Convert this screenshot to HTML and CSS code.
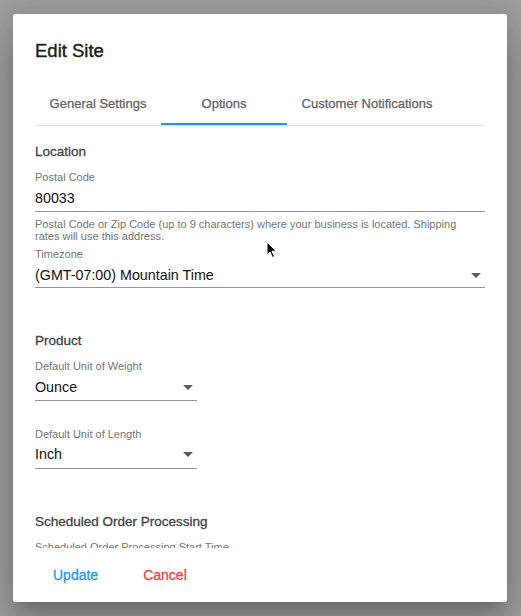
FILE: index.html
```html
<!DOCTYPE html>
<html>
<head>
<meta charset="utf-8">
<link rel="stylesheet" href="styles.css">
</head>
<body>
<div class="dialog">
  <h1 class="title">Edit Site</h1>
  <div class="tabs">
    <div class="tab">General Settings</div>
    <div class="tab active">Options</div>
    <div class="tab">Customer Notifications</div>
  </div>
  <div class="content">
    <h2 class="section first">Location</h2>
    <div class="field">
      <div class="label">Postal Code</div>
      <div class="input">80033</div>
    </div>
    <p class="helper">Postal Code or Zip Code (up to 9 characters) where your business is located. Shipping rates will use this address.</p>
    <div class="field tz">
      <div class="label">Timezone</div>
      <div class="input select">(GMT-07:00) Mountain Time<svg class="arrow" viewBox="7 10 10 5" width="10" height="5"><path d="M7 10l5 5 5-5z"/></svg></div>
    </div>

    <h2 class="section">Product</h2>
    <div class="field short">
      <div class="label">Default Unit of Weight</div>
      <div class="input select">Ounce<svg class="arrow" viewBox="7 10 10 5" width="10" height="5"><path d="M7 10l5 5 5-5z"/></svg></div>
    </div>
    <div class="field short second">
      <div class="label">Default Unit of Length</div>
      <div class="input select">Inch<svg class="arrow" viewBox="7 10 10 5" width="10" height="5"><path d="M7 10l5 5 5-5z"/></svg></div>
    </div>

    <h2 class="section last">Scheduled Order Processing</h2>
    <div class="field">
      <div class="label">Scheduled Order Processing Start Time</div>
    </div>
  </div>
  <div class="actions">
    <button class="btn update">Update</button>
    <button class="btn cancel">Cancel</button>
  </div>
</div>
<svg class="cursor" width="12" height="18" viewBox="0 0 12 18"><path d="M1 1 L1 14 L4 11 L6.5 16.5 L8.5 15.6 L6 10.2 L10.2 10.2 Z" fill="#000" stroke="#fff" stroke-width="1"/></svg>
</body>
</html>
```
FILE: styles.css
```css
html, body {
  margin: 0;
  height: 100%;
}
body {
  background: #9f9f9f;
  padding: 14px 14px 14px 13px;
  box-sizing: border-box;
  font-family: "Liberation Sans", Arial, sans-serif;
  overflow: hidden;
}
.dialog {
  width: 494px;
  height: 588px;
  background: #fff;
  border-radius: 2px;
  box-shadow: 0 11px 15px -7px rgba(0,0,0,.2), 0 24px 38px 3px rgba(0,0,0,.14), 0 9px 46px 8px rgba(0,0,0,.12);
  display: flex;
  flex-direction: column;
  padding: 0 22px;
  box-sizing: border-box;
}
.title {
  margin: 0;
  padding-top: 26px;
  font-size: 18.5px;
  line-height: 22px;
  font-weight: normal;
  -webkit-text-stroke: 0.4px currentColor;
  color: #1d1d1d;
  height: 37px;
}
.tabs {
  display: flex;
  height: 48px;
  border-bottom: 1px solid #e0e0e0;
  box-sizing: content-box;
}
.tab {
  width: 126px;
  box-sizing: border-box;
  display: flex;
  align-items: center;
  justify-content: center;
  font-size: 13px;
  -webkit-text-stroke: 0.25px currentColor;
  color: #5f5f5f;
  white-space: nowrap;
  border-bottom: 2px solid transparent;
  padding-top: 6px;
}
.tab.active {
  border-bottom-color: #2196f3;
}
.tab:last-child {
  width: 160px;
}
.content {
  flex: 1;
  overflow: hidden;
  padding-top: 16px;
}
.section {
  margin: 43px 0 0;
  font-size: 13.5px;
  line-height: 20px;
  font-weight: normal;
  -webkit-text-stroke: 0.3px currentColor;
  color: #424242;
}
.section.first {
  margin-top: 0;
}
.section.last {
  margin-top: 43px;
}
.field {
  margin-top: 8px;
}
.field.short {
  width: 162px;
}
.field.second {
  margin-top: 26px;
}
.label {
  font-size: 11px;
  line-height: 14px;
  color: #757575;
  margin-bottom: 4px;
  white-space: nowrap;
}
.field.second .label {
  margin-bottom: 3px;
}
.input {
  font-size: 14.3px;
  line-height: 20px;
  color: #111;
  padding-bottom: 3px;
  border-bottom: 1px solid #949494;
  display: flex;
  align-items: center;
  justify-content: space-between;
}
.field.tz .input {
  padding-bottom: 2px;
}
.field.second .input {
  padding-bottom: 4px;
}
.arrow {
  fill: #5a5a5a;
  margin-right: 4px;
}
.helper {
  margin: 6px 24px 0 0;
  font-size: 11px;
  line-height: 12px;
  color: #757575;
}
.field.tz {
  margin-top: 5px;
}
.actions {
  height: 54px;
  flex: none;
  display: flex;
  align-items: center;
  gap: 13px;
  padding-left: 2px;
  box-sizing: border-box;
}
.btn {
  background: none;
  border: none;
  font-family: inherit;
  font-size: 14px;
  -webkit-text-stroke: 0.3px currentColor;
  padding: 6px 16px;
  cursor: pointer;
}
.update { color: #2196f3; }
.cancel { color: #f44336; }
.cursor {
  position: absolute;
  left: 266px;
  top: 241px;
}
```
